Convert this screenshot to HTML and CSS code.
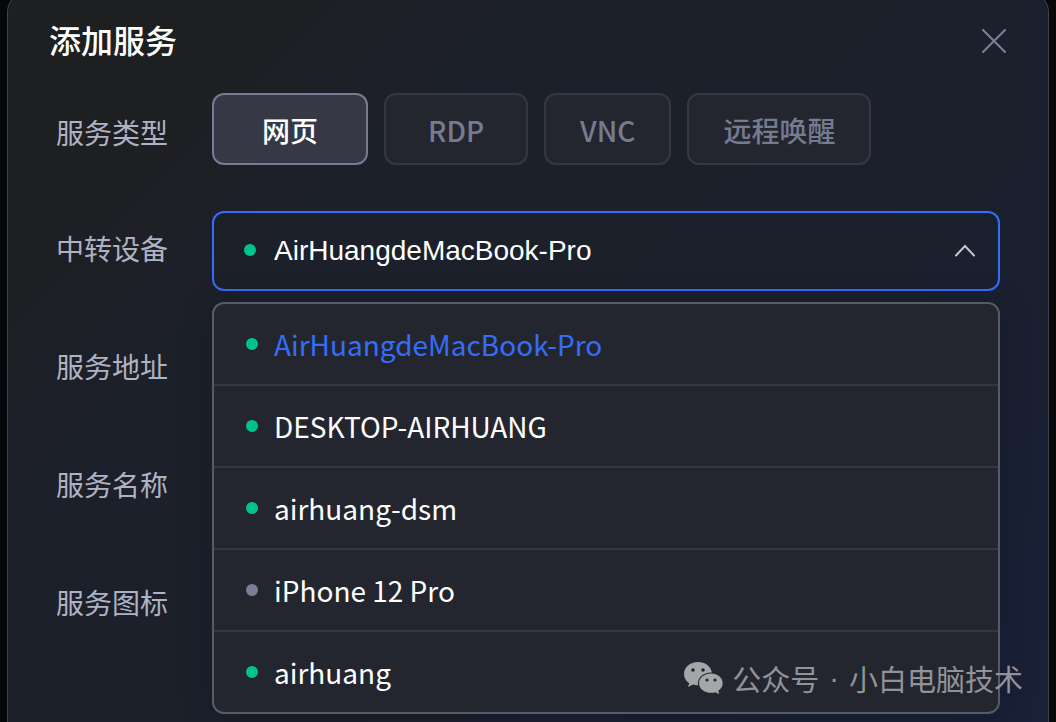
FILE: index.html
```html
<!DOCTYPE html>
<html lang="zh-CN">
<head>
<meta charset="utf-8">
<meta name="viewport" content="width=device-width, initial-scale=1">
<title>添加服务</title>
<link rel="stylesheet" href="styles.css">
</head>
<body>
<main class="dialog" role="dialog" aria-labelledby="dialog-title">
  <header class="dialog-header">
    <h1 class="dialog-title" id="dialog-title">添加服务</h1>
    <button class="close" type="button" aria-label="关闭">
      <svg class="close-icon" viewBox="0 0 24 24" aria-hidden="true"><path d="M1 1L23 23M23 1L1 23"/></svg>
    </button>
  </header>
  <form class="form">
    <div class="row row-types" role="group" aria-labelledby="type-label">
      <span class="label" id="type-label">服务类型</span>
      <div class="types">
        <button class="type type-active" type="button" aria-pressed="true">网页</button>
        <button class="type type-rdp" type="button">RDP</button>
        <button class="type" type="button">VNC</button>
        <button class="type" type="button">远程唤醒</button>
      </div>
    </div>
    <div class="row">
      <label class="label" for="device">中转设备</label>
      <div class="field">
        <select class="select" id="device">
          <option>AirHuangdeMacBook-Pro</option>
        </select>
        <span class="dot select-dot"></span>
        <svg class="chevron" viewBox="0 0 22 14" aria-hidden="true"><path d="M2 11.500L11 2L20 11.500"/></svg>
        <ul class="menu" role="listbox" aria-label="中转设备">
          <li class="option option-selected" role="option" aria-selected="true"><span class="dot"></span>AirHuangdeMacBook-Pro</li>
          <li class="option" role="option"><span class="dot"></span>DESKTOP-AIRHUANG</li>
          <li class="option" role="option"><span class="dot"></span>airhuang-dsm</li>
          <li class="option" role="option"><span class="dot dot-offline"></span>iPhone 12 Pro</li>
          <li class="option" role="option"><span class="dot"></span>airhuang</li>
        </ul>
      </div>
    </div>
    <div class="row">
      <label class="label" for="address">服务地址</label>
      <input class="input" id="address" type="text">
    </div>
    <div class="row">
      <label class="label" for="name">服务名称</label>
      <input class="input" id="name" type="text">
    </div>
    <div class="row">
      <label class="label" for="icon">服务图标</label>
      <input class="input" id="icon" type="text">
    </div>
  </form>
</main>
<div class="watermark">
  <svg class="wechat" viewBox="0 0 40 32" aria-hidden="true">
    <path class="bubble" d="M14 0C6 0 0 5.400 0 12c0 4 2 7 5.200 9.300L4 25l5-2.500c1.600.5 3.300.8 5 .7C13 15 20 10 28 10.500C26.500 4 21 0 14 0Z"/>
    <path class="bubble" d="M27 11.500c-6.700 0-12 4.300-12 9.700s5.300 9.600 12 9.600c1.600 0 3-.2 4.300-.6l4 2-1-3.400c2.700-1.800 4.400-4.500 4.400-7.600 0-5.400-5-9.700-11.700-9.700Z"/>
    <circle class="eye" cx="9" cy="8" r="1.800"/><circle class="eye" cx="19" cy="8" r="1.800"/>
    <circle class="eye" cx="23" cy="18" r="1.600"/><circle class="eye" cx="31" cy="18" r="1.600"/>
  </svg>
  <span class="watermark-text"><span>公众号</span><span class="separator">·</span><span>小白电脑技术</span></span>
</div>
</body>
</html>
```

FILE: styles.css
```css
* { box-sizing: border-box; }

body {
  margin: 0;
  min-height: 100vh;
  padding: 0 7px;
  overflow: hidden;
  background: linear-gradient(90deg, #05070b, #07070a 50%, #0a0909);
  color: #fff;
  font-family: "Noto Sans CJK SC", sans-serif;
  font-size: 28px;
  line-height: 40px;
}

button, input, select { font: inherit; }

.dialog {
  min-height: calc(100vh + 32px);
  margin-top: -8px;
  padding: 24px 48px 32px 41px;
  border: 1px solid #3e424e;
  border-radius: 20px;
  background: linear-gradient(135deg, #1e1f21 0%, #1e1f22 14%, #1c202a 30%, #1b202d 64%, #192039 100%);
}

.dialog-header {
  display: flex;
  align-items: center;
  justify-content: space-between;
  height: 48px;
  margin-bottom: 28px;
}

.dialog-title {
  margin: 0;
  padding-bottom: 4px;
  font-size: 32px;
  font-weight: 500;
  line-height: 44px;
}

.close {
  display: flex;
  padding: 0;
  margin-right: -6px;
  border: 0;
  background: none;
}

.close-icon {
  width: 24px;
  height: 24px;
  fill: none;
  stroke: #7c8196;
  stroke-width: 2;
  stroke-linecap: round;
}

.form {
  display: flex;
  flex-direction: column;
  gap: 38px;
  padding-left: 7px;
}

.row {
  display: flex;
  align-items: center;
  gap: 44px;
  min-height: 80px;
}

.row-types {
  min-height: 72px;
  margin-bottom: 8px;
}

.label {
  flex: none;
  width: 112px;
  padding-bottom: 6px;
  color: #afb2c3;
  font-weight: 400;
}

.row-types .label { padding: 6px 0 0; }

.types {
  display: flex;
  gap: 16px;
}

.type {
  height: 72px;
  padding: 2px 34px 0;
  border: 2px solid #353844;
  border-radius: 12px;
  background: #24262f;
  color: #757b91;
  font-weight: 500;
}

.type-active {
  padding: 2px 48px 0;
  border-color: #757b91;
  background: #363945;
  color: #fff;
}

.type-rdp { padding: 2px 42px 0; }

.field {
  position: relative;
  flex: 1;
  min-width: 0;
}

.select {
  display: block;
  width: 100%;
  height: 80px;
  padding: 0 60px;
  border: 2px solid #356dfa;
  border-radius: 12px;
  outline: 0;
  appearance: none;
  background: transparent;
  color: #fff;
  font-family: "Liberation Sans", Arial, sans-serif;
}

.dot {
  flex: none;
  width: 12px;
  height: 12px;
  border-radius: 50%;
  background: #00c389;
}

.dot-offline { background: #7a7f94; }

.select-dot {
  position: absolute;
  top: 33px;
  left: 32px;
}

.chevron {
  position: absolute;
  top: 33px;
  right: 24px;
  width: 22px;
  height: 14px;
  fill: none;
  stroke: #c3c5cc;
  stroke-width: 2;
  stroke-linecap: round;
  pointer-events: none;
}

.menu {
  position: absolute;
  z-index: 1;
  top: calc(100% + 11px);
  left: 0;
  width: 100%;
  margin: 0;
  padding: 0;
  overflow: hidden;
  border: 2px solid #575b68;
  border-radius: 12px;
  background: #24262f;
  box-shadow: 0 4px 32px rgba(12, 16, 28, 0.3);
  list-style: none;
}

.option {
  display: flex;
  align-items: center;
  gap: 16px;
  height: 80px;
  padding: 0 32px;
}

.option + .option {
  height: 82px;
  border-top: 2px solid #353844;
}

.option-selected { color: #356dfa; }

.input {
  flex: 1;
  min-width: 0;
  height: 80px;
  padding: 0 32px;
  border: 2px solid #353844;
  border-radius: 12px;
  background: transparent;
  color: #fff;
}

.watermark {
  position: absolute;
  z-index: 2;
  right: 33px;
  bottom: 24px;
  display: flex;
  align-items: center;
  gap: 8px;
  color: #929399;
  font-size: 29px;
  font-weight: 400;
}

.watermark-text {
  display: flex;
  gap: 10px;
}

.separator { font-family: "Liberation Sans", Arial, sans-serif; }

.wechat {
  width: 40px;
  height: 32px;
}

.bubble { fill: #a5a6aa; }
.eye { fill: #24262f; }
```
